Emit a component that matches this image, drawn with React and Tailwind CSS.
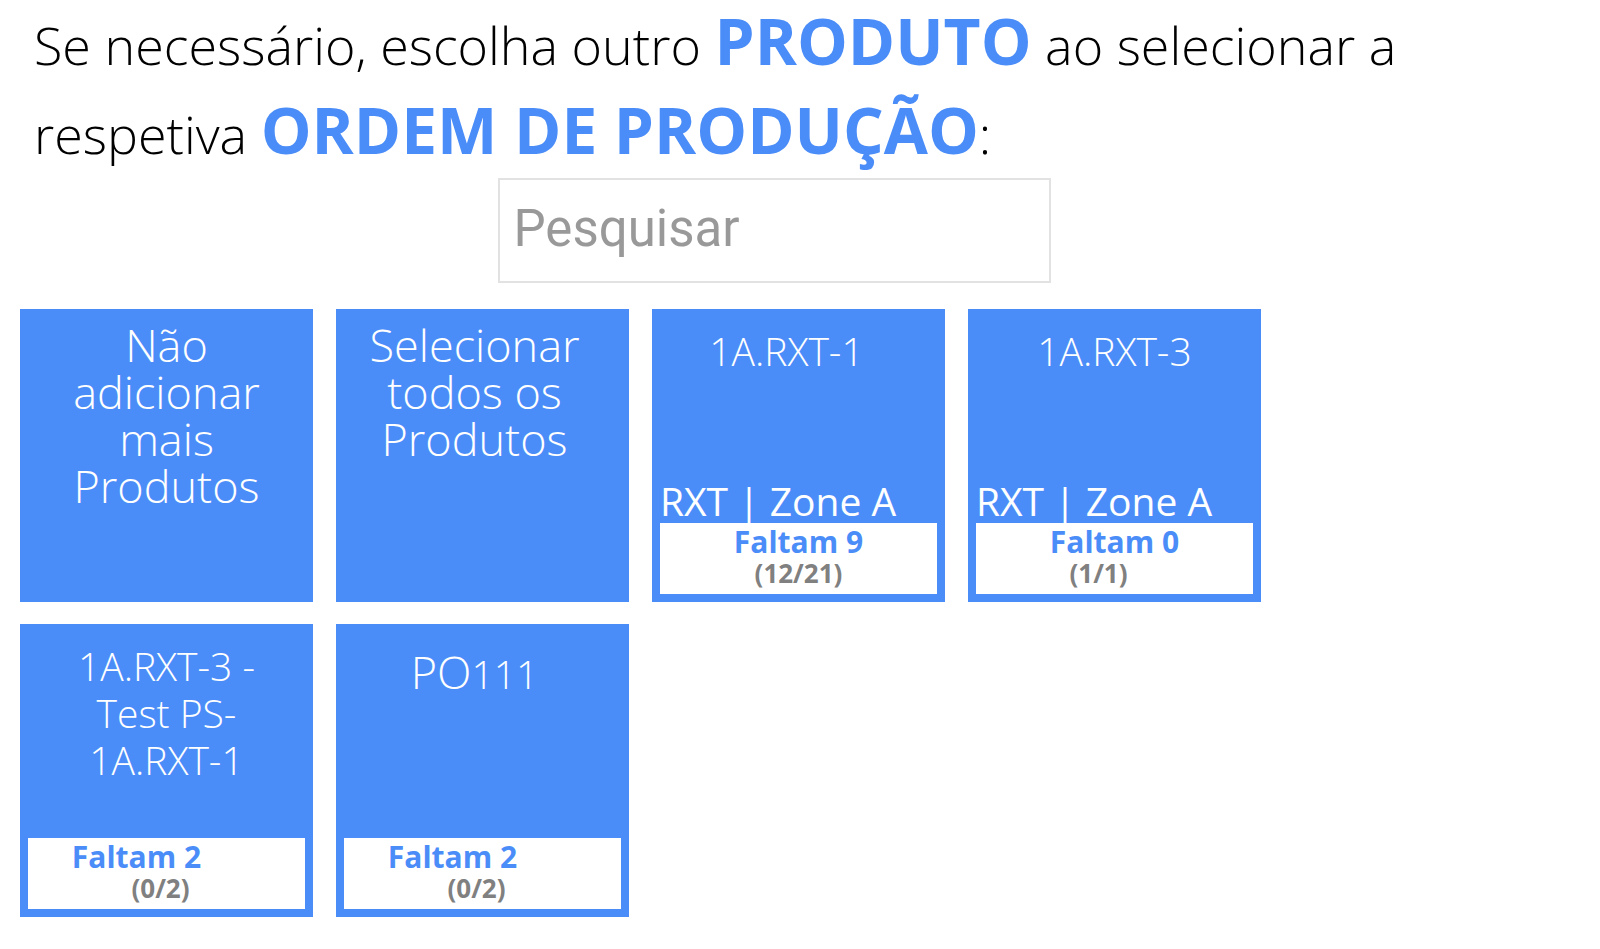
const tiles = [
  { id: "none", kind: "action", lines: ["Não", "adicionar", "mais", "Produtos"] },
  { id: "all", kind: "action", lines: ["Selecionar", "todos os", "Produtos"], titleInset: "pr-4" },
  { id: "rxt-1", lines: ["1A.RXT-1"], titleInset: "pr-6", zone: "RXT | Zone A", left: 9, count: "(12/21)" },
  { id: "rxt-3", lines: ["1A.RXT-3"], zone: "RXT | Zone A", left: 0, count: "(1/1)", countInset: "pr-8" },
  {
    id: "rxt-3-test",
    lines: ["1A.RXT-3 -", "Test PS-", "1A.RXT-1"],
    left: 2,
    count: "(0/2)",
    leftInset: "pr-15",
    countInset: "pr-3",
  },
  {
    id: "po111",
    kind: "order",
    lines: ["111"],
    prefix: "PO",
    titleInset: "pr-4",
    left: 2,
    count: "(0/2)",
    leftInset: "pr-15",
    countInset: "pr-3",
  },
];

const titleStyles = {
  action: "pt-1 text-[45px]",
  product: "pt-2.5 text-[39px]",
  order: "pt-4 text-[39px]",
};

function Tile({ kind = "product", lines, prefix, titleInset = "", zone, left, count, leftInset = "", countInset = "" }) {
  return (
    <button type="button" className="flex aspect-square w-full flex-col bg-[#4b8df8] p-2 text-white">
      <span className={`w-full text-center leading-[47px] font-light ${titleStyles[kind]} ${titleInset}`}>
        {lines.map((line) => (
          <span key={line} className="block">
            {prefix && <span className="text-[45px]">{prefix}</span>}
            {line}
          </span>
        ))}
      </span>
      {count && (
        <span className="mt-auto block w-full">
          {zone && <span className="block text-left text-[39px] leading-[44px]">{zone}</span>}
          <span className="block h-[71px] bg-white text-center font-bold">
            <span className={`block text-[30px] leading-[37px] text-[#4b8df8] ${leftInset}`}>Faltam {left}</span>
            <span className={`block text-[26px] leading-[27px] text-[#808080] ${countInset}`}>{count}</span>
          </span>
        </span>
      )}
    </button>
  );
}

function Highlight({ children }) {
  return <strong className="text-[64px] leading-none font-bold text-[#4b8df8]">{children}</strong>;
}

export default function App() {
  return (
    <main className="min-h-screen bg-white pr-[72px] pl-5 font-['Open_Sans',sans-serif] text-black">
      <h1 className="px-3.5 text-[52px] leading-[89px] font-light">
        Se necessário, escolha outro <Highlight>PRODUTO</Highlight> ao selecionar a
        <br />
        respetiva <Highlight>ORDEM DE PRODUÇÃO</Highlight>:
      </h1>
      <input
        type="search"
        aria-label="Pesquisar"
        placeholder="Pesquisar"
        className="mx-auto block h-[105px] w-[553px] max-w-full border-2 border-[#e2e2e2] px-3.5 pb-1 font-[Roboto,sans-serif] text-[51px] placeholder:text-[#999999]"
      />
      <section className="mt-[26px] grid grid-cols-[repeat(auto-fill,293px)] gap-x-[23px] gap-y-[22px] pr-20">
        {tiles.map((tile) => (
          <Tile key={tile.id} {...tile} />
        ))}
      </section>
    </main>
  );
}
